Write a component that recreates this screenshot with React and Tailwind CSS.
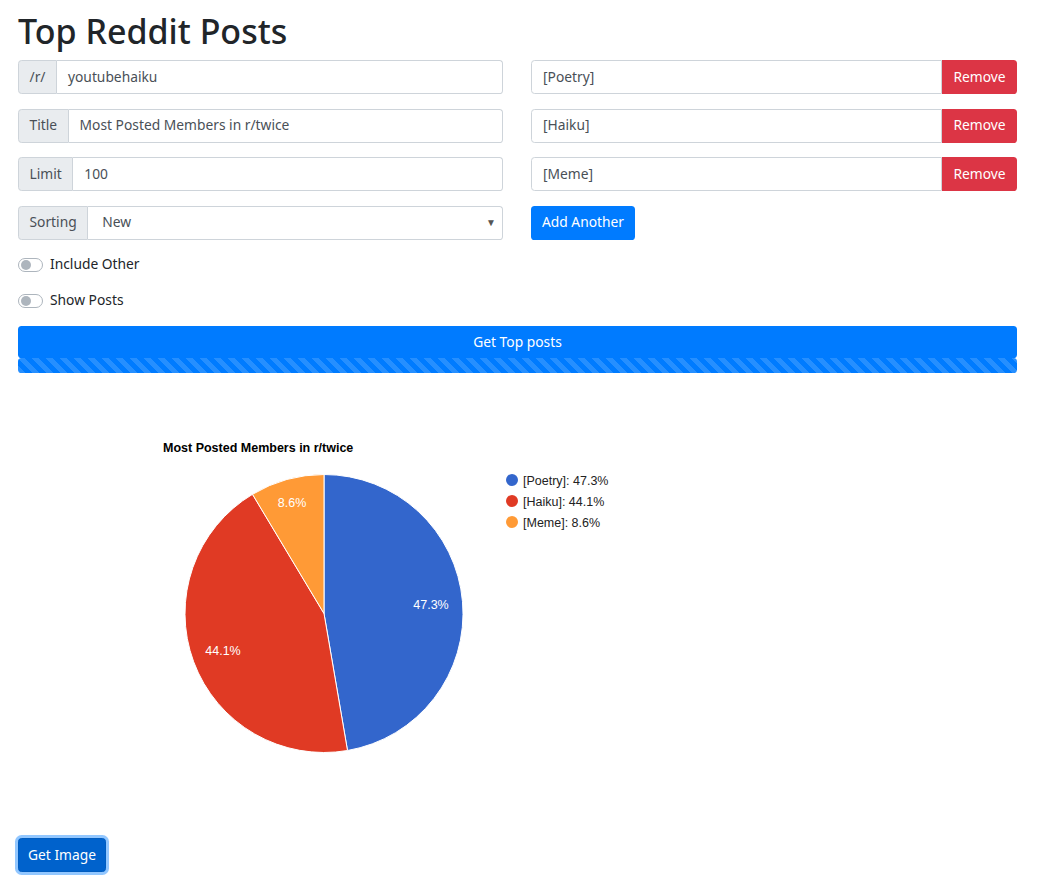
import React from 'react';

const font = "font-['Noto_Sans',sans-serif]";

const stripes =
  'bg-[linear-gradient(45deg,rgba(255,255,255,.15)_25%,transparent_25%,transparent_50%,rgba(255,255,255,.15)_50%,rgba(255,255,255,.15)_75%,transparent_75%,transparent)] bg-[length:14px_14px]';

function Prepended({ label, value, select }) {
  return (
    <div className="flex h-[34px] w-full">
      <div className="flex items-center rounded-l-[3.6px] border border-[#ced4da] bg-[#e9ecef] px-[10.5px] text-[#495057]">
        {label}
      </div>
      <div className="flex flex-1 items-center justify-between rounded-r-[3.6px] border border-l-0 border-[#ced4da] bg-white pl-[11px] pr-[6px] text-[#495057]">
        <span className={select ? 'pl-[3px]' : ''}>{value}</span>
        {select && <span className="text-[10px] text-[#555]">▼</span>}
      </div>
    </div>
  );
}

function TagRow({ value }) {
  return (
    <div className="flex h-[34px] w-full">
      <div className="flex flex-1 items-center rounded-l-[3.6px] border border-[#ced4da] bg-white pl-[11px] text-[#495057]">
        {value}
      </div>
      <button className="w-[75px] rounded-r-[3.6px] bg-[#dc3545] text-white">Remove</button>
    </div>
  );
}

function Switch({ label }) {
  return (
    <div className="flex h-[21.6px] items-center">
      <div className="flex h-[14.4px] w-[25px] items-center rounded-full border border-[#adb5bd] bg-white px-[2px]">
        <div className="h-[10px] w-[10px] rounded-full bg-[#adb5bd]" />
      </div>
      <span className="ml-[7px] text-[#212529]">{label}</span>
    </div>
  );
}

function PieChart() {
  const legend = [
    { c: '#3366cc', t: '[Poetry]: 47.3%' },
    { c: '#e03a24', t: '[Haiku]: 44.1%' },
    { c: '#ff9a36', t: '[Meme]: 8.6%' },
  ];
  return (
    <svg width="700" height="400" className="block font-['Liberation_Sans',Arial,sans-serif]">
      <text x="145" y="32" fontSize="12.5" fontWeight="bold" fill="#000">
        Most Posted Members in r/twice
      </text>
      <path d="M306,193.5 L306,54.5 A139,139 0 0 1 329.5,330.5 Z" fill="#3366cc" stroke="#fff" strokeWidth="1" />
      <path d="M306,193.5 L329.5,330.5 A139,139 0 0 1 234.5,74.3 Z" fill="#e03a24" stroke="#fff" strokeWidth="1" />
      <path d="M306,193.5 L234.5,74.3 A139,139 0 0 1 306,54.5 Z" fill="#ff9a36" stroke="#fff" strokeWidth="1" />
      <text x="413" y="189" fontSize="12.5" fill="#fff" textAnchor="middle">47.3%</text>
      <text x="205" y="235" fontSize="12.5" fill="#fff" textAnchor="middle">44.1%</text>
      <text x="274" y="87" fontSize="12.5" fill="#fff" textAnchor="middle">8.6%</text>
      {legend.map((l, i) => (
        <g key={l.t}>
          <circle cx="494" cy={60 + i * 21} r="6" fill={l.c} />
          <text x="505" y={65 + i * 21} fontSize="12.5" fill="#222">{l.t}</text>
        </g>
      ))}
    </svg>
  );
}

export default function App() {
  return (
    <div className={`min-h-[888px] bg-white pl-[18px] pt-[10px] text-[13.8px] ${font}`}>
      <div className="w-[999px]">
        <h1 className="mb-[7.2px] text-[34px] font-medium leading-[43.2px] text-[#212529]">Top Reddit Posts</h1>

        <div className="grid grid-cols-[485px_486px] gap-x-[28px] gap-y-[14.4px]">
          <Prepended label="/r/" value="youtubehaiku" />
          <TagRow value="[Poetry]" />
          <Prepended label="Title" value="Most Posted Members in r/twice" />
          <TagRow value="[Haiku]" />
          <Prepended label="Limit" value="100" />
          <TagRow value="[Meme]" />
          <Prepended label="Sorting" value="New" select />
          <div>
            <button className="h-[34px] rounded-[3.6px] bg-[#007bff] px-[11px] text-white">Add Another</button>
          </div>
        </div>

        <div className="mt-[14.4px] flex flex-col gap-[14.4px]">
          <Switch label="Include Other" />
          <Switch label="Show Posts" />
        </div>

        <button className="mt-[14.4px] block h-[32px] w-full rounded-[3.6px] bg-[#007bff] text-white">Get Top posts</button>
        <div className={`h-[15px] w-full rounded-[3.6px] bg-[#007bff] ${stripes}`} />

        <div className="mt-[47px]">
          <PieChart />
        </div>

        <button className="mt-[18px] h-[34px] rounded-[3.6px] border border-[#005cbf] bg-[#0062cc] px-[9px] text-white shadow-[0_0_0_3px_rgba(38,143,255,0.5)]">
          Get Image
        </button>
      </div>
    </div>
  );
}
